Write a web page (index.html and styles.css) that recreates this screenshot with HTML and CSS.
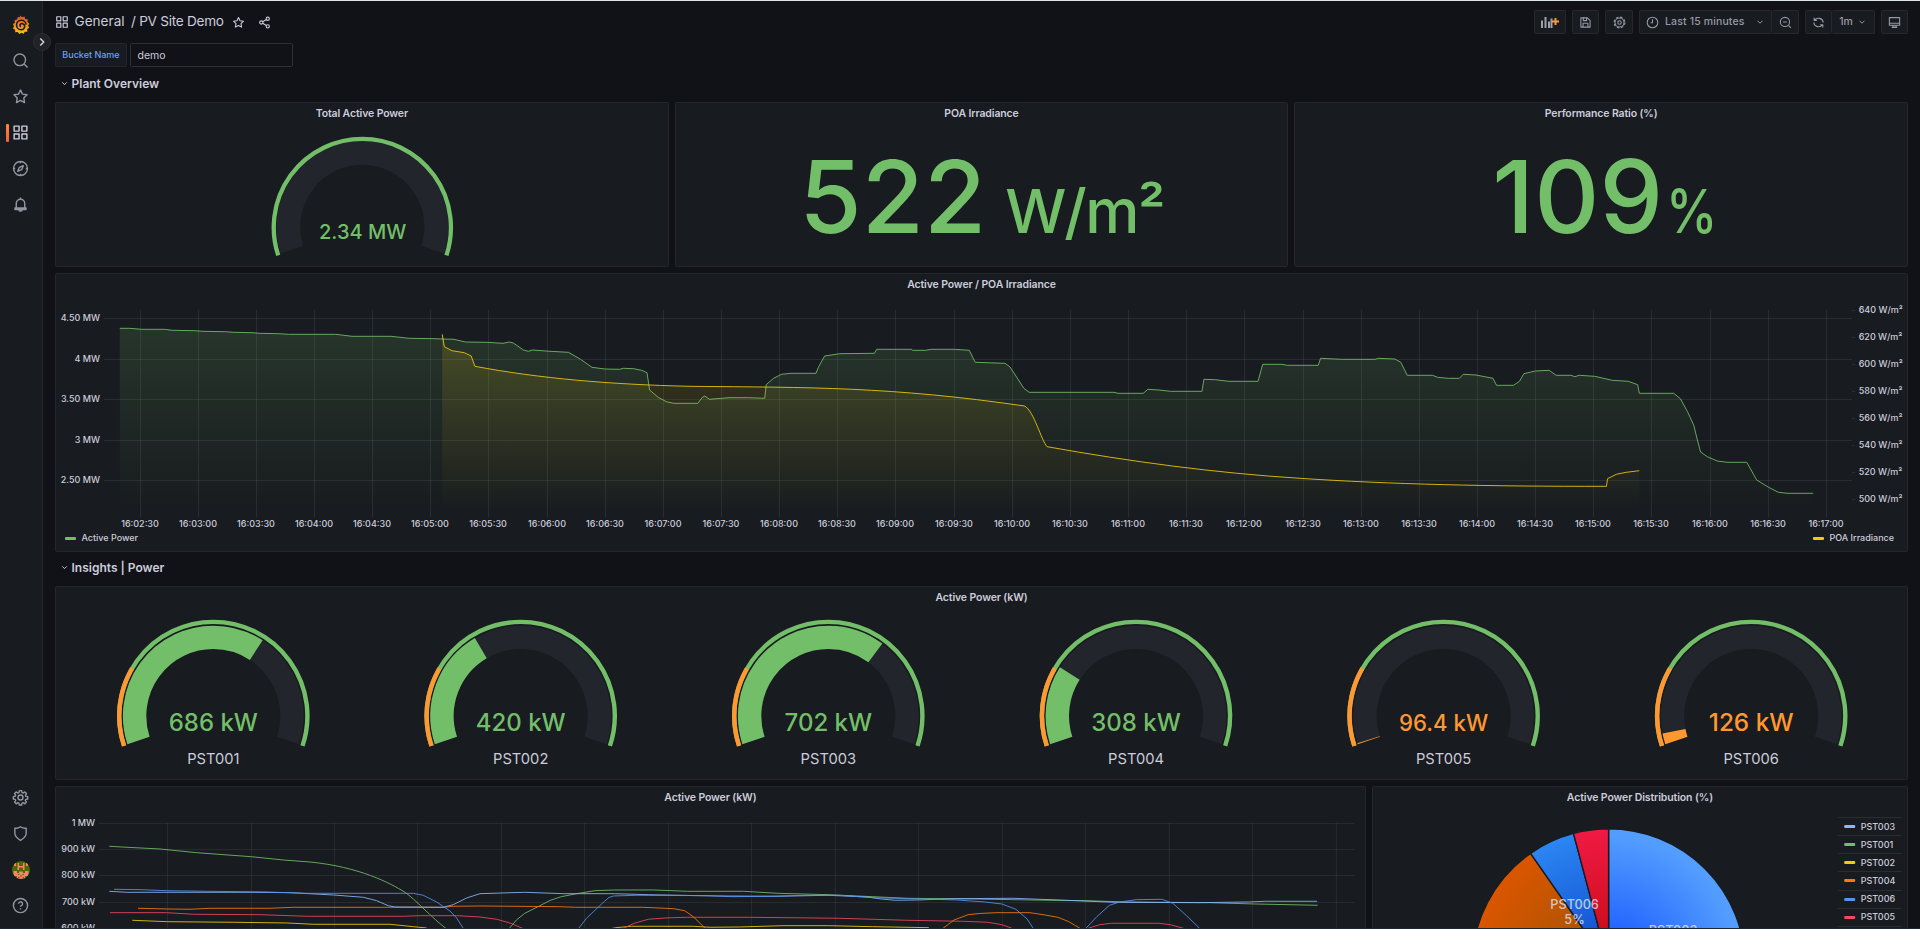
FILE: index.html
```html
<!DOCTYPE html>
<html lang="en">
<head>
<meta charset="utf-8">
<title>PV Site Demo</title>
<link rel="stylesheet" href="styles.css">
</head>
<body>
<svg class="defs" width="0" height="0" aria-hidden="true">
  <defs>
    <linearGradient id="brand" x1="0" y1="0" x2="0" y2="1"><stop offset=".15" stop-color="#f05a28"/><stop offset="1" stop-color="#fbca0a"/></linearGradient>
    <symbol id="i-apps" viewBox="0 0 24 24"><path d="M3 3h7v7H3zM14 3h7v7h-7zM3 14h7v7H3zM14 14h7v7h-7z"/></symbol>
    <symbol id="i-star" viewBox="0 0 24 24"><path d="M12 2.8l2.8 5.9 6.4.9-4.6 4.5 1.1 6.4L12 17.4l-5.7 3.1 1.1-6.4L2.8 9.6l6.4-.9z"/></symbol>
    <symbol id="i-share" viewBox="0 0 24 24"><circle cx="18" cy="5" r="3"/><circle cx="6" cy="12" r="3"/><circle cx="18" cy="19" r="3"/><path d="M8.7 10.5l6.6-4M8.7 13.5l6.6 4"/></symbol>
    <symbol id="i-search" viewBox="0 0 24 24"><circle cx="11" cy="11" r="8.2"/><path d="M17 17l5 5"/></symbol>
    <symbol id="i-compass" viewBox="0 0 24 24"><circle cx="12" cy="12" r="9.8"/><path d="M16 8l-2.4 5.6L8 16l2.4-5.6zM12 2v2.5M12 19.500v2.500M2 12h2.500M19.500 12H22"/></symbol>
    <symbol id="i-bell" viewBox="0 0 24 24"><path d="M12 2v2.500M6 17v-6.500a6 6 0 0 1 12 0V17M4.200 17h15.600v2H4.200zM9.500 19.500a2.600 2.600 0 0 0 5 0"/></symbol>
    <symbol id="i-gear" viewBox="0 0 24 24"><circle cx="12" cy="12" r="3.500"/><path d="M10.300 2.300h3.400l.5 2.700 1.600.7 2.300-1.600 2.300 2.400-1.500 2.200.6 1.600 2.700.5v3.300l-2.700.5-.7 1.700 1.600 2.200-2.400 2.400-2.200-1.600-1.600.7-.5 2.700h-3.400l-.5-2.700-1.600-.7-2.300 1.600-2.300-2.400 1.600-2.200-.7-1.700-2.700-.5v-3.300l2.700-.5.600-1.600-1.500-2.200 2.300-2.400L8.200 5.700 9.800 5z"/></symbol>
    <symbol id="i-shield" viewBox="0 0 24 24"><path d="M4 4.500c3 .4 5.600-.3 8-2 2.400 1.700 5 2.400 8 2v7.300c0 4.200-3.300 7.200-8 10-4.700-2.800-8-5.800-8-10z"/></symbol>
    <symbol id="i-help" viewBox="0 0 24 24"><circle cx="12" cy="12" r="10"/><path d="M9.300 9.600a2.800 2.800 0 1 1 3.900 2.600c-.9.400-1.200.9-1.200 1.700M12 16v1.800"/></symbol>
    <symbol id="i-chev" viewBox="0 0 24 24"><path d="M6 9l6 6 6-6"/></symbol>
    <symbol id="i-save" viewBox="0 0 24 24"><path d="M3.500 3.500h12l5 5v12h-17zM8 3.500v5h6v-5M7.500 20.500v-7h9v7"/></symbol>
    <symbol id="i-cog" viewBox="0 0 24 24"><circle cx="12" cy="12" r="3.200"/><circle cx="12" cy="12" r="8.300"/><circle cx="12" cy="12" r="10" stroke-dasharray="4.500 3.354"/></symbol>
    <symbol id="i-clock" viewBox="0 0 24 24"><circle cx="12" cy="12" r="9.800"/><path d="M12 6v6.500H8.500"/></symbol>
    <symbol id="i-zoomout" viewBox="0 0 24 24"><circle cx="11" cy="11" r="8.500"/><path d="M17.500 17.500L22 22M7.500 11h7"/></symbol>
    <symbol id="i-sync" viewBox="0 0 24 24"><path d="M4 3v5h5M4.500 8a9 9 0 0 1 16.300 4M20 21v-5h-5M19.500 16A9 9 0 0 1 3.200 12"/></symbol>
    <symbol id="i-tv" viewBox="0 0 24 24"><path d="M2.500 3h19v14h-19zM2.500 13.500h19M9 17v3.500h6V17M7 21h10"/></symbol>
  </defs>
</svg>

<div class="app">
  <nav class="side">
    <a class="side-item"><svg class="logo" viewBox="0 0 24 24"><path fill="url(#brand)" fill-rule="evenodd" d="M11.800.5l2 2.300 3.300-1 .8 3.100 3.300.7-.4 3.300 2.400 2-1.600 2.400 1.400 2.900-2.600 1.600.2 3.200-3.200.1-1.400 2.600-2.900-1.200-2.700 1.500-1.800-2.500-3.200.3-.2-3.300-2.800-1.500 1.400-2.700-1.300-2.900L5 9.700 4.500 6.500l3.200-.7.900-3.200 2.400.2z"/><path d="M19 12.300a6 6 0 1 0-6.300 6.300c3.200 0 5.100-2.700 4.400-5.300-.7-2.600-4-3.200-5.300-1.500-.9 1.200-.4 2.700.9 3" fill="none" stroke="#181b1f" stroke-width="2"/></svg></a>
    <a class="side-item"><svg class="ico"><use href="#i-search"/></svg></a>
    <a class="side-item"><svg class="ico"><use href="#i-star"/></svg></a>
    <a class="side-item active"><svg class="ico"><use href="#i-apps"/></svg></a>
    <a class="side-item"><svg class="ico"><use href="#i-compass"/></svg></a>
    <a class="side-item"><svg class="ico"><use href="#i-bell"/></svg></a>
    <span class="side-space"></span>
    <a class="side-item"><svg class="ico"><use href="#i-gear"/></svg></a>
    <a class="side-item"><svg class="ico"><use href="#i-shield"/></svg></a>
    <a class="side-item"><svg class="avatar" viewBox="0 0 18 18"><clipPath id="av"><circle cx="9" cy="9" r="9"/></clipPath><g clip-path="url(#av)"><path fill="#4d6a00" d="M0 0h18v18H0z"/><path fill="#ff7f6e" d="M2 2h2v3H2zM14 2h2v3h-2zM5.500 2H7v3h4V2h1.500v7H11V6.500H7V9H5.500zM1.500 10H5v2h2v-1.500h4V12h2v-2h3.500v5H13v1.500h2V18H3v-1.500h2V15H1.500z"/><path fill="#4d6a00" d="M6 13h1.500v1H6zM10.500 13H12v1h-1.500zM8 14.500h2v1H8zM6 16h1.500v1H6zM10.500 16H12v1h-1.500z"/></g></svg></a>
    <a class="side-item"><svg class="ico"><use href="#i-help"/></svg></a>
    <span class="expand"><svg class="ico"><use href="#i-chev"/></svg></span>
  </nav>

  <main class="main">
    <header class="toolbar">
      <svg class="ico apps"><use href="#i-apps"/></svg>
      <h1 class="crumb"><span class="folder">General</span><span class="dash">/ PV Site Demo</span></h1>
      <svg class="ico star"><use href="#i-star"/></svg>
      <svg class="ico share"><use href="#i-share"/></svg>
      <span class="spring"></span>
      <button class="btn b-add"><svg width="19" height="12" viewBox="0 0 19 12"><path fill="#9fa1ad" d="M0 4.500h2V12H0zM3.500 1h2v11h-2zM7 5.500h2V12H7zM9.500 2.500h2V12h-2z"/><path d="M14.500 2v7M11 5.500h7" stroke="#ff9830" stroke-width="2"/></svg></button>
      <button class="btn b-save"><svg class="ico"><use href="#i-save"/></svg></button>
      <button class="btn b-cog"><svg class="ico"><use href="#i-cog"/></svg></button>
      <div class="group">
        <button class="btn b-time"><svg class="ico"><use href="#i-clock"/></svg><span class="time">Last 15 minutes</span><svg class="ico chev"><use href="#i-chev"/></svg></button>
        <button class="btn b-zoom"><svg class="ico"><use href="#i-zoomout"/></svg></button>
      </div>
      <div class="group">
        <button class="btn b-sync"><svg class="ico"><use href="#i-sync"/></svg></button>
        <button class="btn b-int"><span>1m</span><svg class="ico chev"><use href="#i-chev"/></svg></button>
      </div>
      <button class="btn b-tv"><svg class="ico"><use href="#i-tv"/></svg></button>
    </header>

    <div class="vars"><label class="var-label">Bucket Name</label><div class="var-input">demo</div></div>

    <div class="grid">
      <h2 class="row-title"><svg class="ico"><use href="#i-chev"/></svg>Plant Overview</h2>

      <section class="panel w8 h6">
        <h3 class="title">Total Active Power</h3>
        <svg class="canvas" viewBox="55 102 613 165">
          <path class="track" stroke-width="24" d="M291.600 249.600A74 74 0 1 1 432.400 249.600"/>
          <path class="g" stroke-width="4.300" d="M278 255.200A88.500 88.500 0 1 1 446 255.200"/>
          <text class="g-val" x="362.300" y="239" font-size="20">2.34 MW</text>
        </svg>
      </section>
      <section class="panel w8 h6">
        <h3 class="title">POA Irradiance</h3>
        <div class="stat"><span class="num">522</span><span class="unit sp">W/m²</span></div>
      </section>
      <section class="panel w8 h6">
        <h3 class="title">Performance Ratio (%)</h3>
        <div class="stat"><span class="num">109</span><span class="unit pc">%</span></div>
      </section>

      <section class="panel w24 h10">
        <h3 class="title">Active Power / POA Irradiance</h3>
        <svg class="canvas" viewBox="55 273 1853 279">
          <defs>
            <linearGradient id="fg" gradientUnits="userSpaceOnUse" x1="0" y1="328" x2="0" y2="512"><stop offset="0" stop-color="#73bf69" stop-opacity=".16"/><stop offset="1" stop-color="#73bf69" stop-opacity="0"/></linearGradient>
            <linearGradient id="fy" gradientUnits="userSpaceOnUse" x1="0" y1="334" x2="0" y2="512"><stop offset="0" stop-color="#f2cc0c" stop-opacity=".16"/><stop offset="1" stop-color="#f2cc0c" stop-opacity="0"/></linearGradient>
          </defs>
          <path class="gl" d="M104 318.500H1852M104 359.500H1852M104 399.500H1852M104 440.500H1852M104 480.500H1852"/>
          <path class="gl" d="M1852 310.500h3M1852 337.500h3M1852 364.500h3M1852 391.500h3M1852 418.500h3M1852 445.500h3M1852 472.500h3M1852 499.500h3"/>
          <path class="gl" d="M140.500 310V517M198.500 310V517M256.500 310V517M314.500 310V517M372.500 310V517M430.500 310V517M488.500 310V517M547.500 310V517M605.500 310V517M663.500 310V517M721.500 310V517M779.500 310V517M837.500 310V517M895.500 310V517M954.500 310V517M1012.500 310V517M1070.500 310V517M1128.500 310V517M1186.500 310V517M1244.500 310V517M1303.500 310V517M1361.500 310V517M1419.500 310V517M1477.500 310V517M1535.500 310V517M1593.500 310V517M1651.500 310V517M1710.500 310V517M1768.500 310V517M1826.500 310V517"/>
          <path fill="url(#fg)" d="M119.800 328.300L129.600 328.300 141.800 329.300 164.300 329.300 172.400 330.300 194.900 330.700 203 331.300 225.500 331.700 233.700 332.300 252 332.700 260.200 333.300 278.600 333.700 288.800 334.300 335.700 334.300 352 336.300 390.800 336.300 409.200 338.300 433.700 338.700 454 339.300 465.500 342 486.700 342.300 503 343.300 509.200 342 513.300 343 523.500 350 528.400 351.300 532.400 350 550 351.300 568.400 352.300 580.600 359.300 592 367.300 605 369 619.400 369.300 623.500 368.300 633.700 368.700 641.800 370.300 647 372.700 649.600 390 658.200 397.300 666.300 401.700 673.700 403.300 697.800 403.300 702.400 397.300 704.800 396 709.500 399.300 729 397.700 748.400 397.700 764.700 398.300 766.200 384.700 773.600 378.300 781.400 374.300 791 373.300 816 373.300 818.400 367.300 824.600 356 839.800 353.700 874.400 353.300 876.700 349.300 911.700 349.300 912.500 350.300 925.400 350.300 931.200 349.300 954.500 349.300 969.300 350.300 975.200 362.300 1005 363.300 1009.800 366.700 1016.800 377.300 1023.800 388.300 1029.200 392.300 1114 392.300 1118 393.300 1143.200 393.300 1147.900 389.300 1158.800 390 1170.500 391.300 1202 391.300 1203.900 379.300 1215.200 379.700 1228.800 381.300 1258 381.300 1262.700 364.300 1282 364.300 1287.200 365.300 1318.200 365.300 1320.600 358.300 1341.500 359.300 1375.100 359.300 1378.300 358.300 1394.900 359 1400.800 362.300 1407.200 375.300 1432.500 375.300 1437.600 377.300 1448.300 378.300 1459.300 378.300 1463.300 374.300 1476 375 1493 378.300 1496.500 385.300 1513.500 385.300 1519.500 381.300 1523.800 373.700 1535.300 371 1549.100 370.300 1556.200 375.300 1570.900 375.300 1574.800 376.700 1579.200 375.300 1594.600 376.300 1612.400 380.300 1628.200 381.300 1637.700 384.700 1639.300 393.300 1673.700 393.300 1680.400 398.700 1687.500 411.700 1693.800 425.300 1697.400 440 1700.600 452 1707.300 456.700 1717.200 461 1727 462.300 1746.800 462.300 1756.700 480 1768.600 487.300 1778.400 492.300 1787.100 493.300 1813.200 493.300V517H119.800z"/>
          <polyline class="ln c1" points="119.800 328.300 129.600 328.300 141.800 329.300 164.300 329.300 172.400 330.300 194.900 330.700 203 331.300 225.500 331.700 233.700 332.300 252 332.700 260.200 333.300 278.600 333.700 288.800 334.300 335.700 334.300 352 336.300 390.800 336.300 409.200 338.300 433.700 338.700 454 339.300 465.500 342 486.700 342.300 503 343.300 509.200 342 513.300 343 523.500 350 528.400 351.300 532.400 350 550 351.300 568.400 352.300 580.600 359.300 592 367.300 605 369 619.400 369.300 623.500 368.300 633.700 368.700 641.800 370.300 647 372.700 649.600 390 658.200 397.300 666.300 401.700 673.700 403.300 697.800 403.300 702.400 397.300 704.800 396 709.500 399.300 729 397.700 748.400 397.700 764.700 398.300 766.200 384.700 773.600 378.300 781.400 374.300 791 373.300 816 373.300 818.400 367.300 824.600 356 839.800 353.700 874.400 353.300 876.700 349.300 911.700 349.300 912.500 350.300 925.400 350.300 931.200 349.300 954.500 349.300 969.300 350.300 975.200 362.300 1005 363.300 1009.800 366.700 1016.800 377.300 1023.800 388.300 1029.200 392.300 1114 392.300 1118 393.300 1143.200 393.300 1147.900 389.300 1158.800 390 1170.500 391.300 1202 391.300 1203.900 379.300 1215.200 379.700 1228.800 381.300 1258 381.300 1262.700 364.300 1282 364.300 1287.200 365.300 1318.200 365.300 1320.600 358.300 1341.500 359.300 1375.100 359.300 1378.300 358.300 1394.900 359 1400.800 362.300 1407.200 375.300 1432.500 375.300 1437.600 377.300 1448.300 378.300 1459.300 378.300 1463.300 374.300 1476 375 1493 378.300 1496.500 385.300 1513.500 385.300 1519.500 381.300 1523.800 373.700 1535.300 371 1549.100 370.300 1556.200 375.300 1570.900 375.300 1574.800 376.700 1579.200 375.300 1594.600 376.300 1612.400 380.300 1628.200 381.300 1637.700 384.700 1639.300 393.300 1673.700 393.300 1680.400 398.700 1687.500 411.700 1693.800 425.300 1697.400 440 1700.600 452 1707.300 456.700 1717.200 461 1727 462.300 1746.800 462.300 1756.700 480 1768.600 487.300 1778.400 492.300 1787.100 493.300 1813.200 493.300"/>
          <path fill="url(#fy)" d="M442.200 334.300L444.300 346.700 452 350.700 464.300 352.700 471.200 356 474.900 366.300C540 378.500 610 384.500 690 386.300C810 387.500 890 386.500 1024.600 406C1034 411 1041 440 1047.100 446.700C1130 461.500 1215 473 1300 478.300C1390 484.300 1490 486.500 1606.400 486.300L1607.600 478.700 1616.300 474.300 1626.200 472.300 1639.300 470.700V517H442.200z"/>
          <path class="ln c2" d="M442.200 334.300L444.300 346.700 452 350.700 464.300 352.700 471.200 356 474.900 366.300C540 378.500 610 384.500 690 386.300C810 387.500 890 386.500 1024.600 406C1034 411 1041 440 1047.100 446.700C1130 461.500 1215 473 1300 478.300C1390 484.300 1490 486.500 1606.400 486.300L1607.600 478.700 1616.300 474.300 1626.200 472.300 1639.300 470.700"/>
          <g class="ax end"><text x="100" y="321">4.50 MW</text><text x="100" y="362">4 MW</text><text x="100" y="402">3.50 MW</text><text x="100" y="443">3 MW</text><text x="100" y="483">2.50 MW</text></g>
          <g class="ax"><text x="1858.700" y="313">640 W/m²</text><text x="1858.700" y="340">620 W/m²</text><text x="1858.700" y="367">600 W/m²</text><text x="1858.700" y="394">580 W/m²</text><text x="1858.700" y="421">560 W/m²</text><text x="1858.700" y="448">540 W/m²</text><text x="1858.700" y="475">520 W/m²</text><text x="1858.700" y="502">500 W/m²</text></g>
          <g class="ax mid"><text x="140" y="527">16:02:30</text><text x="198" y="527">16:03:00</text><text x="256" y="527">16:03:30</text><text x="314" y="527">16:04:00</text><text x="372" y="527">16:04:30</text><text x="430" y="527">16:05:00</text><text x="488" y="527">16:05:30</text><text x="547" y="527">16:06:00</text><text x="605" y="527">16:06:30</text><text x="663" y="527">16:07:00</text><text x="721" y="527">16:07:30</text><text x="779" y="527">16:08:00</text><text x="837" y="527">16:08:30</text><text x="895" y="527">16:09:00</text><text x="954" y="527">16:09:30</text><text x="1012" y="527">16:10:00</text><text x="1070" y="527">16:10:30</text><text x="1128" y="527">16:11:00</text><text x="1186" y="527">16:11:30</text><text x="1244" y="527">16:12:00</text><text x="1303" y="527">16:12:30</text><text x="1361" y="527">16:13:00</text><text x="1419" y="527">16:13:30</text><text x="1477" y="527">16:14:00</text><text x="1535" y="527">16:14:30</text><text x="1593" y="527">16:15:00</text><text x="1651" y="527">16:15:30</text><text x="1710" y="527">16:16:00</text><text x="1768" y="527">16:16:30</text><text x="1826" y="527">16:17:00</text></g>
          <rect x="65" y="537" width="11" height="3" rx="1" fill="#73bf69"/><text class="ax" x="81.400" y="541.200">Active Power</text>
          <rect x="1813" y="537" width="11" height="3" rx="1" fill="#f2cc0c"/><text class="ax" x="1829.500" y="541.200">POA Irradiance</text>
        </svg>
      </section>

      <h2 class="row-title"><svg class="ico"><use href="#i-chev"/></svg>Insights | Power</h2>

      <section class="panel w24 h7">
        <h3 class="title">Active Power (kW)</h3>
        <svg class="canvas" viewBox="55 586.500 1853 193.500">
          <defs>
            <path id="ring" pathLength="100" d="M-89.200 29.900A94.100 94.100 0 1 1 89.200 29.900"/>
            <path id="bar" pathLength="100" d="M-74.800 24.500A78.700 78.700 0 1 1 74.800 24.500"/>
            <g id="base"><use href="#bar" class="track" stroke-width="23.400"/><use href="#ring" class="g" stroke-width="4.400"/><use href="#ring" class="o" stroke-width="4.400" stroke-dasharray="22.500 200"/></g>
          </defs>
          <g transform="translate(213.300 716.500)"><use href="#base"/><use href="#bar" class="g" stroke-width="23.400" stroke-dasharray="65.300 200"/><text class="g-val" y="14.500" font-size="24">686 kW</text><text class="g-name" y="47.500">PST001</text></g>
          <g transform="translate(520.700 716.500)"><use href="#base"/><use href="#bar" class="g" stroke-width="23.400" stroke-dasharray="35.900 200"/><text class="g-val" y="14.500" font-size="24">420 kW</text><text class="g-name" y="47.500">PST002</text></g>
          <g transform="translate(828.300 716.500)"><use href="#base"/><use href="#bar" class="g" stroke-width="23.400" stroke-dasharray="67 200"/><text class="g-val" y="14.500" font-size="24">702 kW</text><text class="g-name" y="47.500">PST003</text></g>
          <g transform="translate(1136 716.500)"><use href="#base"/><use href="#bar" class="g" stroke-width="23.400" stroke-dasharray="23.500 200"/><text class="g-val" y="14.500" font-size="24">308 kW</text><text class="g-name" y="47.500">PST004</text></g>
          <g transform="translate(1443.600 716.500)"><use href="#base"/><use href="#bar" class="o" stroke-width="23.400" stroke-dasharray=".3 200"/><text class="g-val warn" y="14.500" font-size="22.200">96.4 kW</text><text class="g-name" y="47.500">PST005</text></g>
          <g transform="translate(1751.200 716.500)"><use href="#base"/><use href="#bar" class="o" stroke-width="23.400" stroke-dasharray="3.300 200"/><text class="g-val warn" y="14.500" font-size="24.300">126 kW</text><text class="g-name" y="47.500">PST006</text></g>
        </svg>
      </section>

      <section class="panel w17 h10">
        <h3 class="title">Active Power (kW)</h3>
        <svg class="canvas" viewBox="55 786 1311 279">
          <path class="gl" d="M99 823.500H1354.500M99 849.500H1354.500M99 875.500H1354.500M99 902.500H1354.500"/>
          <path class="gl" d="M167.500 823V1000M251.500 823V1000M334.500 823V1000M417.500 823V1000M501.500 823V1000M584.500 823V1000M668.500 823V1000M751.500 823V1000M835.500 823V1000M918.500 823V1000M1002.500 823V1000M1085.500 823V1000M1169.500 823V1000M1252.500 823V1000M1336.500 823V1000"/>
          <path class="ln c1" d="M109.300 846.300L121.700 847 160 849 196.700 852.700 251.300 856.700 283.300 860 310 862C360 867 390 883 405 892.300C415 899 432 918 446.700 929M508 930L516.500 920 524.900 913.300 538.900 906.300 550 900.500 561.400 896.700 578 893.500 595 890.700 614.700 890 654 890 687.700 891.300 743.800 891.300 777.500 893.300 828 894.700 872.900 896.700 906.600 898.300 973.900 899 1030 900 1086 900.700 1125.500 902 1209.600 902.700 1254.500 904 1317.900 905.300"/>
          <path class="ln c2" d="M132.300 920.300L166.700 921.700 233.300 922.300 286.700 923 313.300 924.300 390 924.300 413.300 926.700 426.700 928M610 929L615.800 927.700 631.500 926.300 693.300 926.300 710 927.300 740 927 783 925.700 828 925.700 872.900 926.700 929 927.700"/>
          <path class="ln c5" d="M110 912.700L166.700 912.700 193.300 914.300 260 914.700 306.700 916.300 403.300 916.300 420 915.700 456.700 915.700 480 917 496.800 919.300 510.900 923.300 524 929M621 929.500L634.300 923.300 648.400 919.300 665 918 687.700 917.300 749.400 917.300 839.200 918.300 906.600 920.300 962.700 921.300 987.900 922.300 1002 924.700 1014 929M1086 929L1100 924.700 1111.400 923.300 1159 923.300 1170.300 924.700 1186 929"/>
          <path class="ln c4" d="M138 908.300L166.700 909 190 909.300 210 908.300 270 908.300 293.300 907.300 443.300 907.300 453.300 906.300 480 906 558.600 906.700 575.400 907.300 642.800 907.300 673.600 908.700 684.800 910.700 693.300 916.700 707 930M941 930L954.200 920 968.300 914.700 980 913.500 996.300 912.700 1030 912.700 1045 915 1058 917.300 1069 921.700 1083 930"/>
          <path class="ln c3" d="M109.300 891.300L126.700 892.300 251.300 892.300 290 892.700 333.300 895 363.300 897.300 376.700 900.700 388.300 905.700 395 907 443.300 907.300 453.300 904.700 466.700 898 480 893.700 524.900 892.300 564.200 893.700 614.700 893.700 648.400 894.700 715.700 896 777.500 896.300 828 895.300 867.200 897 881.300 899 895.300 900.300 917.800 900 957 898.700 1013.200 898.300 1058 900 1114.200 902.300 1198.400 902.700 1248.900 902 1265.700 901.300 1317.300 901.300"/>
          <path class="ln c6" d="M114 889.300L140 889.700 166.700 890.700 206.700 891.300 266.700 892 306.700 893.300 413.300 893.300 423.300 895.300 436.700 902 450 911 456.700 918 464 929.500M577.500 930L586.600 918.300 604.600 901.300 609 897.500 613.600 896 637 895.300 710 895.700 732 896.700 770 896.300 805 895.300 839.200 895.300 872.900 897.700 957 900 985 902 1002 904 1016 909.300 1027.200 919 1034.500 930M1084.500 930L1097 916.700 1109.700 905.300 1119.800 902 1136.600 899.700 1161.900 899.300 1173 903.300 1187 916 1201.500 930"/>
          <g class="ax end"><text x="95" y="826">1 MW</text><text x="95" y="852">900 kW</text><text x="95" y="878">800 kW</text><text x="95" y="905">700 kW</text><text x="95" y="931">600 kW</text></g>
        </svg>
      </section>

      <section class="panel w7 h10">
        <h3 class="title">Active Power Distribution (%)</h3>
        <svg class="canvas" viewBox="1372 786 536 279">
          <defs>
            <radialGradient id="p3" gradientUnits="userSpaceOnUse" cx="1608.500" cy="965.200" r="136.400"><stop offset="0" stop-color="#1250ff"/><stop offset=".95" stop-color="#539dff"/></radialGradient>
            <radialGradient id="p6" gradientUnits="userSpaceOnUse" cx="1608.500" cy="965.200" r="136.400"><stop offset="0" stop-color="#0d45c8"/><stop offset="1" stop-color="#2b86f2"/></radialGradient>
            <radialGradient id="p5" gradientUnits="userSpaceOnUse" cx="1608.500" cy="965.200" r="136.400"><stop offset="0" stop-color="#c00a10"/><stop offset="1" stop-color="#f11a44"/></radialGradient>
            <radialGradient id="p4" gradientUnits="userSpaceOnUse" cx="1608.500" cy="965.200" r="136.400"><stop offset="0" stop-color="#9c5500"/><stop offset="1" stop-color="#db5500"/></radialGradient>
          </defs>
          <g class="slices">
            <path fill="url(#p3)" d="M1608.500 965.200V828.800A136.400 136.400 0 0 1 1744.900 965.200z"/>
            <path fill="url(#p4)" d="M1608.500 965.200H1472.100A136.400 136.400 0 0 1 1530.500 853.300z"/>
            <path fill="url(#p6)" d="M1608.500 965.200L1530.500 853.300A136.400 136.400 0 0 1 1573.400 833.400z"/>
            <path fill="url(#p5)" d="M1608.500 965.200L1573.400 833.400A136.400 136.400 0 0 1 1608.500 828.800z"/>
          </g>
          <g class="pie-t"><text x="1574.500" y="908.500">PST006</text><text x="1574.500" y="924.200">5%</text><text x="1673" y="934.700">PST003</text></g>
          <path class="gl" d="M1838 817.500h64M1838 835.500h64M1838 853.500h64M1838 871.500h64M1838 890.500h64M1838 908.500h64M1838 926.500h64"/>
          <g><rect x="1844" y="825" width="11" height="3" rx="1" fill="#8ab8ff"/><rect x="1844" y="843" width="11" height="3" rx="1" fill="#73bf69"/><rect x="1844" y="861" width="11" height="3" rx="1" fill="#f2cc0c"/><rect x="1844" y="879" width="11" height="3" rx="1" fill="#ff780a"/><rect x="1844" y="898" width="11" height="3" rx="1" fill="#5794f2"/><rect x="1844" y="916" width="11" height="3" rx="1" fill="#f2495c"/></g>
          <g class="ax"><text x="1860.500" y="830">PST003</text><text x="1860.500" y="848">PST001</text><text x="1860.500" y="866">PST002</text><text x="1860.500" y="884">PST004</text><text x="1860.500" y="902">PST006</text><text x="1860.500" y="920">PST005</text></g>
        </svg>
      </section>
    </div>
  </main>
</div>
</body>
</html>
```
FILE: styles.css
```css
* { box-sizing: border-box; }
html, body { margin: 0; height: 929px; overflow: hidden; }
body { background: #111217; color: #ccccdc; font-family: Inter, Roboto, "Liberation Sans", sans-serif; }
.defs { position: absolute; }
.app { display: flex; width: 1920px; height: 929px; border-top: 1px solid #dbe6e2; border-bottom: 1px solid #1b2834; overflow: hidden; }
.ico { fill: none; stroke: currentColor; stroke-width: 2; stroke-linejoin: round; flex: none; }

.side { position: relative; z-index: 2; flex: none; width: 43px; display: flex; flex-direction: column; padding: 6px 0 4px; background: #181b1f; border-right: 1px solid #25272c; }
.side-item { position: relative; height: 36px; padding: 0 1px 1px 0; display: flex; align-items: center; justify-content: center; color: #9495a1; }
.side-item .ico { width: 17px; height: 17px; }
.side-item.active { color: #ccccdc; }
.side-item.active::before { content: ""; position: absolute; left: 6px; top: 9px; width: 3px; height: 18px; border-radius: 1px; background: linear-gradient(#ff8833, #f55f3e); }
.side-space { flex: 1; }
.logo { width: 19px; height: 19px; }
.avatar { width: 18px; height: 18px; }
.expand { position: absolute; left: 33px; top: 32px; width: 18px; height: 18px; border-radius: 50%; background: #202226; border: 1px solid #2c2e33; display: flex; align-items: center; justify-content: center; color: #ccccdc; }
.expand .ico { width: 14px; height: 14px; transform: rotate(-90deg); stroke-width: 2.600; }

.main { flex: 1; min-width: 0; padding: 9px 12px 0; }
.toolbar { display: flex; align-items: center; height: 24px; color: #ccccdc; }
.apps { width: 14px; height: 14px; }
.crumb { display: flex; gap: 7px; margin: 0 0 0 5.500px; font-size: 13.600px; font-weight: 400; white-space: nowrap; line-height: 22px; height: 24px; }
.folder { width: 49.500px; }
.dash { width: 93px; letter-spacing: -.27px; }
.star { width: 13px; height: 13px; margin-left: 8px; }
.share { width: 13px; height: 13px; margin-left: 13px; }
.spring { flex: 1; }
.btn { height: 24px; padding: 0; display: flex; align-items: center; justify-content: center; background: #181b1f; border: 1px solid #26282d; border-radius: 1.500px; color: #9899a6; font: 500 10.500px/22px Inter, Roboto, sans-serif; }
.btn .ico { width: 13px; height: 13px; }
.btn .chev { width: 10px; height: 10px; stroke-width: 2.400; }
.group { display: flex; margin-left: 6px; }
.group .btn + .btn { border-left: 0; }
.b-add { width: 32px; }
.b-save { width: 27px; margin-left: 6px; }
.b-cog { width: 28px; margin-left: 6px; }
.b-time { width: 133px; justify-content: flex-start; padding-left: 6px; }
.b-time .chev { margin-left: 8px; }
.time { margin-left: 6px; width: 82px; text-align: left; white-space: nowrap; letter-spacing: .14px; }
.b-zoom { width: 27px; }
.b-sync { width: 27px; }
.b-int { width: 43px; gap: 4px; }
.b-tv { width: 27px; margin-left: 6px; }

.vars { display: flex; gap: 3px; margin-top: 9px; height: 24px; }
.var-label { width: 72px; background: #181b1f; border: 1px solid #222429; border-radius: 1.500px; color: #6e9fff; font-size: 9px; font-weight: 500; line-height: 22px; text-align: center; white-space: nowrap; }
.var-input { width: 163px; background: #111217; border: 1px solid #2d2f34; border-radius: 1.500px; padding-left: 6.500px; font-size: 10.500px; line-height: 23px; }

.grid { display: grid; grid-template-columns: repeat(24, 1fr); grid-auto-rows: 22.500px; gap: 6px; margin-top: 6px; }
.row-title { grid-column: span 24; display: flex; align-items: center; gap: 2.500px; margin: 0; padding: 0 0 2px 5px; font-size: 12px; font-weight: 600; }
.row-title .ico { width: 9px; height: 9px; stroke-width: 2.600; }
.panel { position: relative; background: #181b1f; border: 1px solid #24262b; border-radius: 1.500px; overflow: hidden; display: flex; flex-direction: column; }
.w8 { grid-column: span 8; }
.w24 { grid-column: span 24; }
.w17 { grid-column: span 17; }
.w7 { grid-column: span 7; }
.h6 { grid-row: span 6; }
.h7 { grid-row: span 7; }
.h10 { grid-row: span 10; }
.title { margin: 0; height: 21px; line-height: 21px; font-size: 10.500px; font-weight: 600; letter-spacing: -.12px; text-align: center; flex: none; }
.canvas { display: block; width: calc(100% + 2px); flex: none; margin: -22px -1px 0; }

.stat { flex: 1; display: flex; justify-content: center; align-items: baseline; color: #73bf69; font-weight: 500; line-height: 144px; white-space: nowrap; }
.num { font-size: 101px; }
.unit { font-size: 61px; }
.sp { margin-left: 19px; letter-spacing: -1.500px; }
.pc { margin-left: 3px; width: 44px; transform: scaleX(.85); transform-origin: left; }

.track { fill: none; stroke: #22252b; }
.g { fill: none; stroke: #73bf69; }
.o { fill: none; stroke: #ff9830; }
.g-val { fill: #73bf69; text-anchor: middle; font-weight: 500; }
.g-val.warn { fill: #ff9830; }
.g-name { fill: #ccccdc; text-anchor: middle; font-size: 14.700px; }
.gl { fill: none; stroke: #f0faff; stroke-opacity: .08; stroke-width: 1; }
.ln { fill: none; stroke-width: .85; stroke-linejoin: round; }
.c1 { stroke: #73bf69; }
.c2 { stroke: #f2cc0c; }
.c3 { stroke: #8ab8ff; }
.c4 { stroke: #ff780a; }
.c5 { stroke: #f2495c; }
.c6 { stroke: #5794f2; }
.ax { fill: #ccccdc; font-size: 9px; font-weight: 500; }
.end { text-anchor: end; }
.mid { text-anchor: middle; }
.slices path { stroke: #181b1f; stroke-width: 1.400; }
.pie-t { fill: #d5d5e2; fill-opacity: .9; font-size: 12.700px; font-weight: 500; text-anchor: middle; }
```
